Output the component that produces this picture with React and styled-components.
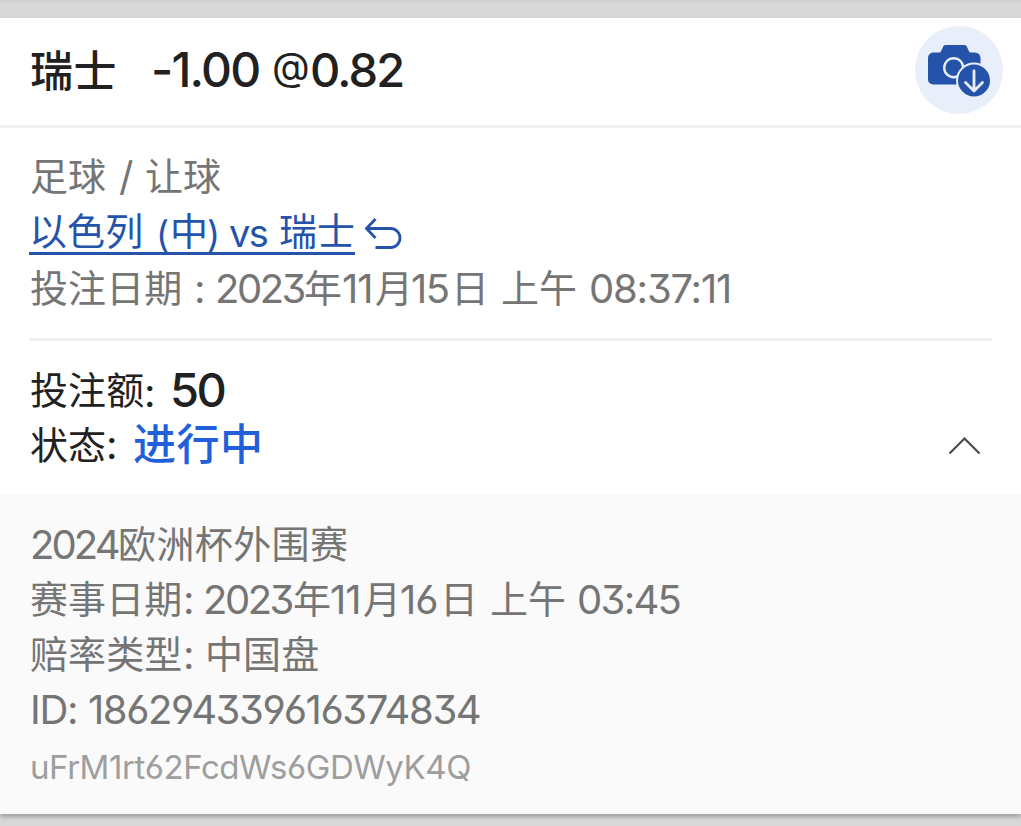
import styled, { createGlobalStyle } from "styled-components";

const colors = {
  ink: "#212121",
  grey: "#757575",
  light: "#9e9e9e",
  navy: "#2553aa",
  blue: "#2160da",
  line: "#efefef",
};

const GlobalStyle = createGlobalStyle`
  body {
    margin: 0;
    background: #d8d8d8;
    overflow: hidden;
  }
  * {
    box-sizing: border-box;
  }
`;

const Page = styled.div`
  width: 1021px;
  height: 826px;
  padding-top: 18px;
  overflow: hidden;
  background: linear-gradient(#cfcfcf, #d8d8d8 4px);
  font-family: Inter, "Noto Sans CJK SC", sans-serif;
  font-feature-settings: "cv03", "cv04", "cv09";
`;

const Card = styled.article`
  height: 796px;
  background: #fff;
  box-shadow: 0 3px 4px #00000040;
`;

const Header = styled.header`
  display: flex;
  justify-content: space-between;
  height: 110px;
  padding: 8px 18px 0 30px;
  border-bottom: 3px solid ${colors.line};
`;

const CameraButton = styled.button`
  width: 88px;
  height: 88px;
  padding: 0;
  border: none;
  border-radius: 50%;
  background: #e8effa;
  cursor: pointer;
  & > svg {
    display: block;
  }
`;

const Match = styled.section`
  height: 213px;
  margin: 0 29px;
  padding: 21px 0 0 1px;
  border-bottom: 3px solid ${colors.line};
`;

const Stake = styled.section`
  display: flex;
  justify-content: space-between;
  height: 154px;
  padding: 21px 40px 0 30px;
`;

const ToggleButton = styled.button`
  width: 34px;
  height: 22px;
  margin-top: 73px;
  padding: 0;
  border: none;
  background: none;
  cursor: pointer;
  & > svg {
    display: block;
  }
`;

const Details = styled.section`
  height: 319px;
  padding: 22px 0 0 30px;
  background: #fafafa;
`;

const Line = styled.div`
  display: flex;
  align-items: baseline;
  height: ${(props) => props.$height || 55}px;
  line-height: 55px;
  color: ${(props) => props.$color || colors.grey};
`;

const TitleLine = styled(Line)`
  padding-top: 20px;
`;

const TokenLine = styled(Line)`
  padding-top: 3px;
`;

/* Latin letters and digits */
const Latin = styled.span`
  flex: none;
  width: ${(props) => props.$width}px;
  font-size: ${(props) => props.$size || 40}px;
  font-weight: ${(props) => props.$weight || 400};
  letter-spacing: ${(props) => props.$track || 0}px;
  line-height: ${(props) => (props.$size > 40 ? "48px" : "inherit")};
  white-space: pre;
`;

/* The at sign stands on the baseline, as tall as the digits */
const AtSign = styled(Latin)`
  font-feature-settings: "case";
  line-height: 48px;
  transform: translateY(-2px);
`;

/* Chinese characters, lifted a little above the Latin baseline */
const Han = styled.span`
  flex: none;
  width: ${(props) => props.$width}px;
  font-family: "Noto Sans CJK SC", sans-serif;
  font-size: ${(props) => props.$size || 38}px;
  font-weight: ${(props) => props.$weight || 400};
  letter-spacing: ${(props) => props.$track || 0.1}px;
  color: ${(props) => props.$color || "inherit"};
  line-height: 1;
  white-space: pre;
  transform: translateY(${(props) => props.$shift ?? -1}px);
`;

const StakeLine = styled(Line)`
  padding-top: 3px;
`;

const TeamsLink = styled.a`
  display: flex;
  align-items: baseline;
  width: 326px;
  height: 50px;
  margin-left: -1px;
  padding-top: 1px;
  border-bottom: 3px solid ${colors.navy};
  color: ${colors.navy};
`;

const ReturnIcon = styled.svg`
  align-self: flex-start;
  margin: 11px 0 0 8px;
`;

function CameraIcon() {
  return (
    <svg width="88" height="88" viewBox="0 0 88 88" fill="none">
      <path
        d="M18 26.5h6.5c1 0 1.3-.5 1.7-1.4l1.8-4.2c.5-1.2 1.2-1.9 2.5-1.9h19c1.3 0 2 .7 2.5 1.9l1.8 4.2c.4.9.8 1.4 1.8 1.4H60a5.5 5.5 0 0 1 5.5 5.5v26.5H18a5 5 0 0 1-5-5V32a5.5 5.5 0 0 1 5-5.5z"
        fill={colors.navy}
      />
      <circle cx="38.7" cy="41.7" r="9.5" stroke="#e8effa" strokeWidth="2.4" />
      <circle cx="59" cy="54.5" r="18" fill="#e8effa" />
      <circle cx="59" cy="54.5" r="16" fill={colors.navy} />
      <path
        d="M59 45v19.500M50.500 56.500l8.500 8.500 8.500-8.500"
        stroke="#e8effa"
        strokeWidth="2.8"
        strokeLinecap="round"
        strokeLinejoin="round"
      />
    </svg>
  );
}

export default function App() {
  return (
    <Page>
      <GlobalStyle />
      <Card>
        <Header>
          <TitleLine $height={88} $color={colors.ink}>
            <Han $width={121} $size={43} $weight={500} $track={0.5} $shift={0}>
              瑞士
            </Han>
            <Latin $width={121} $size={48} $weight={500} $track={-1.8}>
              -1.00
            </Latin>
            <AtSign $width={38} $size={39}>
              @
            </AtSign>
            <Latin $width={100} $size={47} $weight={500} $track={-1.8}>
              0.82
            </Latin>
          </TitleLine>
          <CameraButton aria-label="保存">
            <CameraIcon />
          </CameraButton>
        </Header>

        <Match>
          <Line $height={56}>
            <Han $width={89}>足球</Han>
            <Latin $width={26}>/</Latin>
            <Han $width={80}>让球</Han>
          </Line>
          <Line $height={56} $color={colors.navy}>
            <TeamsLink>
              <Han $width={127} $shift={-2}>
                以色列
              </Han>
              <Latin $width={14} $size={36}>
                (
              </Latin>
              <Han $width={37} $shift={-2}>
                中
              </Han>
              <Latin $width={22} $size={36}>
                )
              </Latin>
              <Latin $width={50} $size={38} $track={-1.5}>
                vs
              </Latin>
              <Han $width={76} $shift={-2}>
                瑞士
              </Han>
            </TeamsLink>
            <ReturnIcon width="42" height="36" viewBox="0 0 42 36" fill="none">
              <path
                d="M12.500 3L3.500 12.500L12.500 22M3.500 12.500H27.500a9.500 9.500 0 0 1 0 19H12.500"
                stroke={colors.navy}
                strokeWidth="2.800"
              />
            </ReturnIcon>
          </Line>
          <Line>
            <Han $width={164}>投注日期</Han>
            <Latin $width={21}>:</Latin>
            <Latin $width={89} $track={-2.5}>
              2023
            </Latin>
            <Han $width={38}>年</Han>
            <Latin $width={33} $track={-1}>
              11
            </Latin>
            <Han $width={36}>月</Han>
            <Latin $width={40} $track={-1.5}>
              15
            </Latin>
            <Han $width={50}>日</Han>
            <Han $width={88}>上午</Han>
            <Latin $width={160} $track={-1.2}>
              08:37:11
            </Latin>
          </Line>
        </Match>

        <Stake>
          <div>
            <StakeLine $color={colors.ink}>
              <Han $width={114} $shift={-3}>
                投注额
              </Han>
              <Latin $width={26}>:</Latin>
              <Latin $width={60} $size={47} $weight={500} $track={-2.5}>
                50
              </Latin>
            </StakeLine>
            <Line $color={colors.ink}>
              <Han $width={76} $shift={0}>
                状态
              </Han>
              <Latin $width={27}>:</Latin>
              <Han
                $width={140}
                $size={43}
                $weight={500}
                $track={0.5}
                $color={colors.blue}
                $shift={1}
              >
                进行中
              </Han>
            </Line>
          </div>
          <ToggleButton aria-label="收起">
            <svg width="34" height="22" viewBox="0 0 34 22" fill="none">
              <path d="M2.500 18.500L17.500 3.500L32.500 18.500" stroke="#4c4c4c" strokeWidth="2.2" />
            </svg>
          </ToggleButton>
        </Stake>

        <Details>
          <Line>
            <Latin $width={88} $track={-2.9}>
              2024
            </Latin>
            <Han $width={240} $track={0.4}>
              欧洲杯外围赛
            </Han>
          </Line>
          <Line>
            <Han $width={153}>赛事日期</Han>
            <Latin $width={20}>:</Latin>
            <Latin $width={90} $track={-2.5}>
              2023
            </Latin>
            <Han $width={37}>年</Han>
            <Latin $width={33} $track={-1}>
              11
            </Latin>
            <Han $width={37}>月</Han>
            <Latin $width={40} $track={-1}>
              16
            </Latin>
            <Han $width={50}>日</Han>
            <Han $width={87}>上午</Han>
            <Latin $width={120} $track={-1.7}>
              03:45
            </Latin>
          </Line>
          <Line>
            <Han $width={153}>赔率类型</Han>
            <Latin $width={22}>:</Latin>
            <Han $width={130}>中国盘</Han>
          </Line>
          <Line>
            <Latin $width={58} $track={-1.3}>
              ID:
            </Latin>
            <Latin $width={420} $track={-1.4}>
              186294339616374834
            </Latin>
          </Line>
          <TokenLine $color={colors.light}>
            <Latin $width={460} $size={33} $track={-0.45}>
              uFrM1rt62FcdWs6GDWyK4Q
            </Latin>
          </TokenLine>
        </Details>
      </Card>
    </Page>
  );
}
